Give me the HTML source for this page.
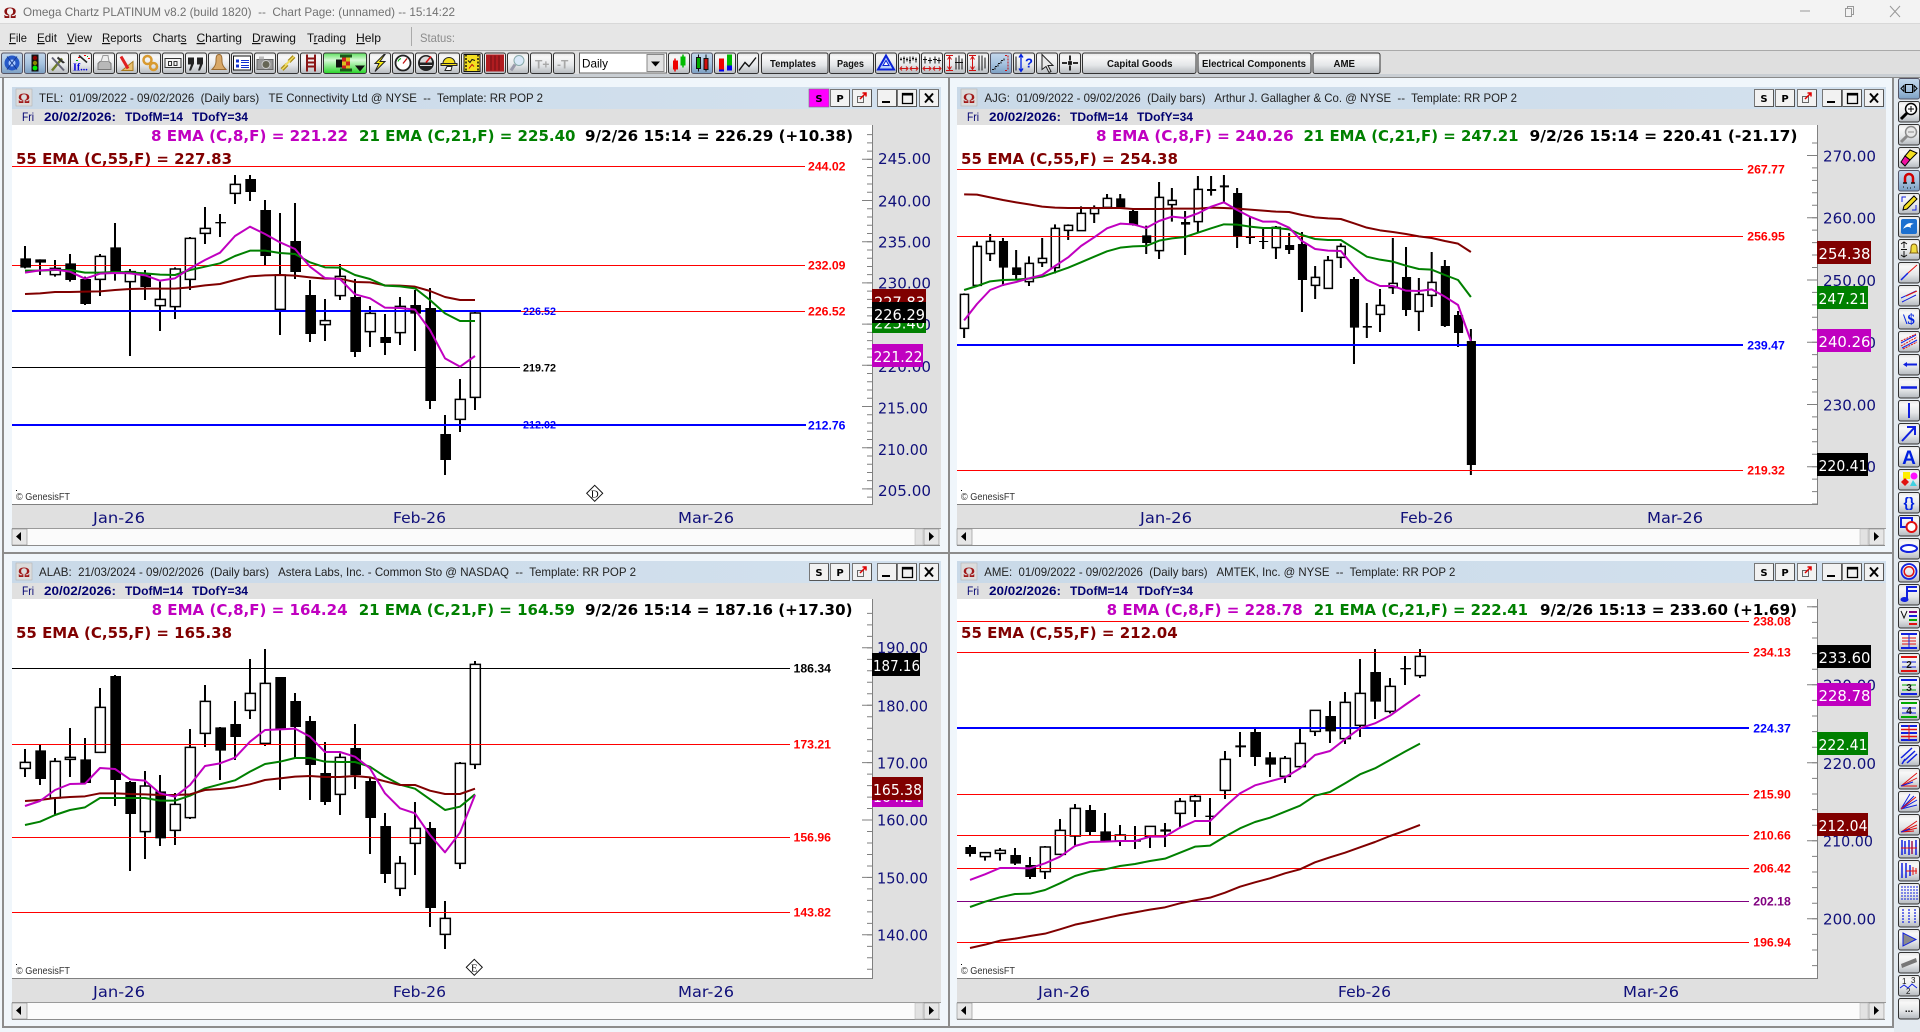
<!DOCTYPE html>
<html><head><meta charset="utf-8"><title>Omega Chartz PLATINUM</title>
<style>
html,body{margin:0;padding:0;background:#f0f6fb;overflow:hidden}
svg{display:block}
text{white-space:pre;font-family:"Liberation Sans",sans-serif}
.h{font:bold 15px "DejaVu Sans",sans-serif}
.a{font:15px "DejaVu Sans",sans-serif;fill:#10107a}
.t{font:15px "DejaVu Sans",sans-serif;fill:#fff}
.l{font:bold 12px "Liberation Sans",sans-serif}
.s{font:bold 11px "Liberation Sans",sans-serif}
.w{fill:none;stroke:#000;stroke-width:6}
.wb{fill:#fff;stroke:#000;stroke-width:4.5}
.m{fill:none;stroke:#c000c0;stroke-width:6;stroke-linejoin:round}
.g{fill:none;stroke:#008000;stroke-width:6;stroke-linejoin:round}
.r{fill:none;stroke:#800000;stroke-width:6;stroke-linejoin:round}
.tick{fill:none;stroke:#808080}
.bl{font:bold 10.5px "Liberation Sans",sans-serif;fill:#111}
.tt{font:12px "Liberation Sans",sans-serif;fill:#222}
.dd{font:bold 12px "Liberation Sans",sans-serif;fill:#000070}
.mn{font:12px "Liberation Sans",sans-serif;fill:#111}
.c{font:10px "Liberation Sans",sans-serif;fill:#333}
</style></head><body>
<svg xmlns="http://www.w3.org/2000/svg" width="1920" height="1032" viewBox="0 0 1920 1032">
<defs>
<linearGradient id="gb" x1="0" y1="0" x2="0" y2="1"><stop offset="0" stop-color="#e6e6e6"/><stop offset=".2" stop-color="#f8f8f8"/><stop offset=".6" stop-color="#e4e6e8"/><stop offset="1" stop-color="#b4b9be"/></linearGradient>
<linearGradient id="ga" x1="0" y1="0" x2="0" y2="1"><stop offset="0" stop-color="#c4d8ec"/><stop offset=".5" stop-color="#a8c4e0"/><stop offset="1" stop-color="#7c9fc2"/></linearGradient>
<linearGradient id="gg" x1="0" y1="0" x2="0" y2="1"><stop offset="0" stop-color="#5ee05e"/><stop offset=".35" stop-color="#d8fad8"/><stop offset="1" stop-color="#28d428"/></linearGradient>
<linearGradient id="gt" x1="0" y1="0" x2="1" y2="0"><stop offset="0" stop-color="#c9d9e8"/><stop offset="1" stop-color="#d3e1ee"/></linearGradient>
<g id="b"><rect x=".5" y=".5" width="21" height="20.5" rx="2" fill="url(#gb)" stroke="#333"/></g>
<g id="ba"><rect x=".5" y=".5" width="21" height="20.5" rx="2" fill="url(#ga)" stroke="#556"/></g>
<g id="wb"><rect x=".5" y=".5" width="19" height="17" fill="#f2f2f2" stroke="#777"/><path d="M1 17.500H19.500V1" fill="none" stroke="#555"/></g>
<g id="p">
<rect x="12" y="87" width="929" height="22" fill="url(#gt)"/>
<rect x="12" y="109" width="929" height="16" fill="#e0e0e0"/>
<rect x="12" y="125" width="860" height="379" fill="#fff"/>
<rect x="872" y="125" width="69" height="379" fill="#e0e0e0"/>
<rect x="12" y="504" width="929" height="25" fill="#e0e0e0"/>
<rect x="872" y="125" width="1" height="380" fill="#808080"/>
<rect x="12" y="504" width="861" height="1" fill="#808080"/>
<rect x="12" y="528" width="929" height="1" fill="#9a9a9a"/>
<rect x="12" y="529" width="928" height="16" fill="#fbfbfb"/>
<rect x="12" y="545" width="928" height="1" fill="#8c8c8c"/>
<rect x="12" y="529" width="15" height="16" fill="#e6e6e6" stroke="#888" stroke-width=".6"/>
<path d="M21 532v9l-5-4.500z" fill="#000"/>
<rect x="915" y="529" width="8" height="16" fill="#e2e2e2" stroke="#bbb" stroke-width=".6"/>
<rect x="924" y="529" width="15" height="16" fill="#e6e6e6" stroke="#888" stroke-width=".6"/>
<path d="M929 532v9l5-4.500z" fill="#000"/>
<rect x="16" y="89" width="16" height="17" fill="#dcdcdc" stroke="#b5b5b5" stroke-width=".6"/>
<text x="24" y="103" text-anchor="middle" style="font:bold 15px 'Liberation Serif',serif;fill:#a01818">Ω</text>
<use href="#wb" x="809" y="89"/><use href="#wb" x="830" y="89"/><use href="#wb" x="852" y="89"/>
<use href="#wb" x="877" y="89"/><use href="#wb" x="897" y="89"/><use href="#wb" x="919" y="89"/>
<text x="819" y="102" text-anchor="middle" style="font:bold 10px 'DejaVu Sans',sans-serif;fill:#000">S</text>
<text x="840" y="102" text-anchor="middle" style="font:bold 10px 'DejaVu Sans',sans-serif;fill:#000">P</text>
<path d="M857.500 96.500h6v6h-6z" fill="none" stroke="#666"/><path d="M860 99l6-6m-3.500 0h3.500v3.500" fill="none" stroke="#e00000" stroke-width="1.500"/>
<rect x="882" y="101" width="8" height="2" fill="#000"/>
<rect x="902.500" y="93.500" width="10" height="10" fill="none" stroke="#000" stroke-width="1.300"/><rect x="902" y="93" width="11" height="2.500" fill="#000"/>
<path d="M925 93.500l8 9m0-9l-8 9" stroke="#000" stroke-width="2" fill="none"/>
</g>
</defs>

<rect width="1920" height="1032" fill="#f0f6fb"/>
<!-- window top -->
<rect width="1920" height="23" fill="#f3f3f3"/>
<rect y="23" width="1920" height="1" fill="#d8d8d8"/>
<rect y="24" width="1920" height="26" fill="#e6e6e6"/>
<rect y="50" width="1920" height="1" fill="#a9a9a9"/>
<rect y="51" width="1920" height="23" fill="#dfdfdf"/>
<rect y="74" width="1920" height="3" fill="#c9ced3"/>
<rect y="77" width="1920" height="1" fill="#8a8a8a"/>
<text x="10" y="18" text-anchor="middle" style="font:bold 16px 'Liberation Serif',serif;fill:#8a1010">Ω</text>
<text x="23" y="16" textLength="432" lengthAdjust="spacingAndGlyphs" style="font:12px 'Liberation Sans',sans-serif;fill:#717171">Omega Chartz PLATINUM v8.2 (build 1820)  --  Chart Page: (unnamed) -- 15:14:22</text>
<path d="M1800 11h10" stroke="#999"/><path d="M1845.500 8.500h6v8h-6zM1847.500 8.500v-2h6v8h-2" fill="none" stroke="#999"/><path d="M1890 6l10 11m0-11l-10 11" stroke="#999" fill="none"/>
<text class="mn" x="9" y="42" textLength="18" lengthAdjust="spacingAndGlyphs"><tspan text-decoration="underline">F</tspan>ile</text>
<text class="mn" x="37" y="42" textLength="20" lengthAdjust="spacingAndGlyphs"><tspan text-decoration="underline">E</tspan>dit</text>
<text class="mn" x="67" y="42" textLength="25" lengthAdjust="spacingAndGlyphs"><tspan text-decoration="underline">V</tspan>iew</text>
<text class="mn" x="102" y="42" textLength="40" lengthAdjust="spacingAndGlyphs"><tspan text-decoration="underline">R</tspan>eports</text>
<text class="mn" x="152.500" y="42" textLength="34" lengthAdjust="spacingAndGlyphs">Chart<tspan text-decoration="underline">s</tspan></text>
<text class="mn" x="196.500" y="42" textLength="45.500" lengthAdjust="spacingAndGlyphs"><tspan text-decoration="underline">C</tspan>harting</text>
<text class="mn" x="252" y="42" textLength="44" lengthAdjust="spacingAndGlyphs"><tspan text-decoration="underline">D</tspan>rawing</text>
<text class="mn" x="307" y="42" textLength="39" lengthAdjust="spacingAndGlyphs">T<tspan text-decoration="underline">r</tspan>ading</text>
<text class="mn" x="356" y="42" textLength="25" lengthAdjust="spacingAndGlyphs"><tspan text-decoration="underline">H</tspan>elp</text>
<rect x="411" y="27" width="1" height="19" fill="#aaa"/>
<text x="420" y="42" textLength="35" lengthAdjust="spacingAndGlyphs" style="font:12px 'Liberation Sans',sans-serif;fill:#8c8c8c">Status:</text>

<!-- top toolbar -->
<g transform="translate(0,52.500)">
<use href="#ba" x="1"/><g transform="translate(1,0)"><circle cx="11" cy="10.500" r="7.500" fill="#2558c8"/><circle cx="11" cy="10.500" r="3.500" fill="#a8c8ff"/><path d="M6 4l10 13M16 4L6 17" stroke="#143a90"/></g>
<use href="#ba" x="24"/><g transform="translate(24,0)"><rect x="7.500" y="2" width="7" height="17" fill="#111"/><circle cx="11" cy="5.500" r="2.200" fill="#800"/><circle cx="11" cy="10.500" r="2.200" fill="#880"/><circle cx="11" cy="15.500" r="2.400" fill="#0e0"/></g>
<use href="#b" x="47"/><g transform="translate(47,0)"><path d="M5 18L15 6" stroke="#6f7d2a" stroke-width="2.500"/><path d="M11 4l7 6-2 1-6-5z" fill="#333"/><path d="M5 5l12 13" stroke="#667" stroke-width="2"/></g>
<use href="#b" x="70"/><g transform="translate(70,0)"><text x="3" y="18" style="font:bold 10px 'Liberation Serif',serif;fill:#0000e0">If...</text><path d="M9 3l8 7" stroke="#222" stroke-width="1.500"/><path d="M8 5h2M14 3h2M18 6h2" stroke="#e00"/><path d="M6 8h2M17 4h1" stroke="#0a0"/></g>
<use href="#b" x="93"/><g transform="translate(93,0)"><path d="M5 11l2-2h9l2 2v6H5z" fill="#b8b8b8" stroke="#777"/><path d="M8 9l2-6h5l1 6z" fill="#eee" stroke="#999"/></g>
<use href="#b" x="116"/><g transform="translate(116,0)"><path d="M17 18H6l11-9z" fill="#e8c070" stroke="#a87a20"/><path d="M5 4l7 12" stroke="#e02020" stroke-width="3"/></g>
<use href="#b" x="139"/><g transform="translate(139,0)"><circle cx="8.500" cy="7.500" r="4" fill="none" stroke="#d89a30" stroke-width="2.500"/><circle cx="14.500" cy="14" r="3.500" fill="none" stroke="#d89a30" stroke-width="2.500"/></g>
<use href="#b" x="162"/><g transform="translate(162,0)"><path d="M3 6h16v9H3z" fill="#f4f4f4" stroke="#333"/><path d="M6.500 9h3v4h-3zM12 9h3v4h-3z" fill="none" stroke="#333"/></g>
<use href="#b" x="185"/><g transform="translate(185,0)"><path d="M3 5h6v6l-3 7h-2l2-6H3zM12 5h6v6l-3 7h-2l2-6h-3z" fill="#222"/></g>
<use href="#b" x="208"/><g transform="translate(208,0)"><path d="M11 2c3 0 3 3 3 7s3 7 4 8H4c1-1 4-4 4-8s0-7 3-7z" fill="#d8a868" stroke="#9a6a30"/></g>
<use href="#b" x="231"/><g transform="translate(231,0)"><path d="M2.500 3.500h17v14h-17z" fill="#fff" stroke="#111"/><path d="M5 7h3v3H5zM5 12h3v3H5z" fill="#1030d0"/><path d="M10 8h8M10 10h8M10 13h8M10 15h8" stroke="#1030d0"/></g>
<use href="#b" x="254"/><g transform="translate(254,0)"><path d="M3 7h16v10H3z" fill="#999" stroke="#666"/><circle cx="12" cy="12" r="4" fill="#665" stroke="#ccc"/><path d="M5 4h5v3H5z" fill="#bbb"/></g>
<use href="#b" x="277"/><g transform="translate(277,0)"><path d="M5 17l5-5M12 9l5-5" stroke="#a88a18" stroke-width="4"/><path d="M8 13l5-5" stroke="#f0dc60" stroke-width="2"/><path d="M5 17l5-5M12 9l5-5" stroke="#f0dc60" stroke-width="1.500"/></g>
<use href="#b" x="300"/><g transform="translate(300,0)"><path d="M7 2v17M15 2v17M7 6h8M7 10h8M7 14h8" stroke="#8a1414" stroke-width="2" fill="none"/></g>
<rect x="323.500" y=".5" width="43" height="20.500" rx="2" fill="url(#gg)" stroke="#333"/>
<g transform="translate(323,0)"><path d="M13 7h6v8h-6z" fill="#111"/><path d="M19 5h8v11h-8z" fill="#d8c020"/><path d="M19 5h4v4h-4zM23 9h4v4h-4zM19 13h4v3h-4z" fill="#d02020"/><path d="M17 2h12v3H17zM17 16h12v3H17z" fill="#1a5a1a"/><path d="M32 13h10l-5 6z" fill="#111"/></g>
<use href="#b" x="369"/><g transform="translate(369,0)"><path d="M15 2L6 11h4l-4 8 10-10h-5l5-7z" fill="#f8ee10" stroke="#222"/></g>
<use href="#b" x="392"/><g transform="translate(392,0)"><circle cx="11" cy="10.500" r="7.500" fill="#fff" stroke="#222" stroke-width="1.800"/><path d="M11 11l4-5" stroke="#c01010" stroke-width="1.300"/><path d="M6 9a5 5 0 0 1 3-3" stroke="#0a0" fill="none"/></g>
<use href="#b" x="415"/><g transform="translate(415,0)"><circle cx="11" cy="10.500" r="8" fill="#222"/><path d="M5 10a6 6 0 0 1 12 0z" fill="#d8d8d8"/><path d="M11 10l5-6" stroke="#e01010" stroke-width="1.500"/><path d="M5 13h12" stroke="#ddd"/></g>
<use href="#b" x="438"/><g transform="translate(438,0)"><path d="M5 11a6 6 0 0 1 12 0z" fill="#f4e020" stroke="#222"/><path d="M3 11h16v2H3z" fill="#f4e020" stroke="#222"/><path d="M7 18l2-4h5l-1 4z" fill="#fff" stroke="#222"/></g>
<use href="#b" x="461"/><g transform="translate(461,0)"><path d="M3 2h16v17H3z" fill="#f4e020" stroke="#111"/><path d="M5 2v17M17 2v17" stroke="#111" stroke-width="1.500" stroke-dasharray="2 1.500"/><path d="M7 8l2 2 2-3 3 1" stroke="#111" fill="none"/><path d="M8 16l3-4 2 2" stroke="#c01010" fill="none"/></g>
<use href="#b" x="484"/><g transform="translate(484,0)"><path d="M2 2h18v17H2z" fill="#b01c20"/><path d="M7 3v15M11 3v15M15 3v15" stroke="#701014"/></g>
<use href="#b" x="507"/><g transform="translate(507,0)"><circle cx="12" cy="8" r="5" fill="#d8e8f8" stroke="#8aa"/><path d="M8 12l-4 6" stroke="#99a" stroke-width="3"/></g>
<use href="#b" x="530"/><text x="535" y="16" style="font:bold 12px 'Liberation Sans',sans-serif;fill:#a8a8a8">T+</text>
<use href="#b" x="553"/><text x="557" y="16" style="font:bold 12px 'Liberation Sans',sans-serif;fill:#a8a8a8">-T</text>
<path d="M579.500 .5h87v20h-87z" fill="#fff" stroke="#666"/>
<text x="582" y="15" textLength="26" lengthAdjust="spacingAndGlyphs" style="font:12px 'Liberation Sans',sans-serif;fill:#000">Daily</text>
<rect x="647" y="2" width="17" height="17" fill="#e2e2e2" stroke="#888"/><path d="M651 9h9l-4.500 5z" fill="#000"/>
<use href="#b" x="668"/><g transform="translate(668,0)"><path d="M7 6v13" stroke="#e00" stroke-width="1.500"/><path d="M5 8h5v9H5z" fill="#e00"/><path d="M15 2v13" stroke="#0b0" stroke-width="1.500"/><path d="M12.500 4h5v9h-5z" fill="#0b0"/></g>
<use href="#ba" x="691"/><g transform="translate(691,0)"><path d="M7.500 2v17M15 2v17" stroke="#111"/><path d="M5.500 5h4v11h-4z" fill="#0a0" stroke="#111"/><path d="M13 6h4v11h-4z" fill="#d01010" stroke="#111"/></g>
<use href="#b" x="714"/><g transform="translate(714,0)"><path d="M5 6h5v11H5z" fill="#e00"/><path d="M5 17h5v2H5z" fill="#00e"/><path d="M13 2h5v11h-5z" fill="#0b0"/><path d="M13 13h5v5h-5z" fill="#00e"/></g>
<use href="#b" x="737"/><path transform="translate(737,0)" d="M2 18l6-8 4 4 7-9" stroke="#111" stroke-width="1.400" fill="none"/>
<rect x="761.500" y=".5" width="66.500" height="20.500" rx="2" fill="url(#gb)" stroke="#333"/>
<text class="bl" x="770" y="14.500" textLength="46" lengthAdjust="spacingAndGlyphs">Templates</text>
<rect x="829.500" y=".5" width="44" height="20.500" rx="2" fill="url(#gb)" stroke="#333"/>
<text class="bl" x="837" y="14.500" textLength="27" lengthAdjust="spacingAndGlyphs">Pages</text>
<use href="#b" x="875"/><g transform="translate(875,0)"><path d="M11 3L3 17h16z" fill="#b8d0f8" stroke="#0a22d8" stroke-width="2"/><path d="M11 8l-3 5h6z" fill="#fff" stroke="#0a22d8"/></g>
<use href="#b" x="898"/><g transform="translate(898,0)"><path d="M3 8v-3M6 11V4M9 9V5M12 11V4M15 8V4M18 10V5" stroke="#111" fill="none"/><path d="M2 7h2M5 6h2M8 7h2M11 8h2M14 6h2M17 7h2" stroke="#111"/><path d="M3 16h6M13 16h6M4 14l-2 2 2 2M8 14l2 2-2 2M14 14l-2 2 2 2M18 14l2 2-2 2" stroke="#d01010" fill="none"/></g>
<use href="#b" x="921"/><g transform="translate(921,0)"><path d="M4 4v7M9 5v6M14 4v7M18 5v6M2 7h4M7 8h4M12 7h4M16 8h4" stroke="#111" fill="none"/><path d="M3 16h6M13 16h6M4 14l-2 2 2 2M8 14l2 2-2 2M14 14l-2 2 2 2M18 14l2 2-2 2" stroke="#d01010" fill="none"/></g>
<use href="#b" x="944"/><g transform="translate(944,0)"><path d="M2 3h7M2 18h7M5.500 5v12M3.500 7l2-3 2 3M3.500 14l2 3 2-3" stroke="#d01010" fill="none"/><path d="M12 5v12M15 3v14M18 6v11M11 10h8" stroke="#111" fill="none"/></g>
<use href="#b" x="967"/><g transform="translate(967,0)"><path d="M2 3h7M2 18h7M5.500 5v12M3.500 7l2-3 2 3M3.500 14l2 3 2-3" stroke="#d01010" fill="none"/><path d="M12 3v15M15 3v15M18 5v11" stroke="#111" fill="none"/></g>
<use href="#ba" x="990"/><g transform="translate(990,0)"><path d="M2 17h3v-3h3v-3h3V8h3V5" stroke="#111" fill="none" stroke-dasharray="2 1"/><path d="M18 3v15M15 3h3M15 18h3" stroke="#d01010" stroke-dasharray="2 1" fill="none"/></g>
<use href="#b" x="1013"/><g transform="translate(1013,0)"><path d="M3 4v14" stroke="#111"/><path d="M8 3v16M6 5l2-3 2 3M6 16l2 3 2-3" stroke="#0020e0" fill="none" stroke-width="1.300"/><text x="12" y="15" style="font:bold 13px 'Liberation Sans',sans-serif;fill:#0020e0">?</text></g>
<use href="#b" x="1036"/><path transform="translate(1036,0)" d="M6 2v15l4-3 3 6 2-1-3-6h5z" fill="#e8e8e8" stroke="#222"/>
<use href="#b" x="1059"/><path transform="translate(1059,0)" d="M11 3v5M11 13v5M3 10.500h5M14 10.500h5M10 9.500h2v2h-2z" stroke="#111" stroke-width="1.800" fill="none"/>
<rect x="1082.500" y=".5" width="113.500" height="20.500" rx="2" fill="url(#gb)" stroke="#333"/>
<text class="bl" x="1107" y="14.500" textLength="65.500" lengthAdjust="spacingAndGlyphs">Capital Goods</text>
<rect x="1198" y=".5" width="113" height="20.500" rx="2" fill="url(#gb)" stroke="#333"/>
<text class="bl" x="1202" y="14.500" textLength="104" lengthAdjust="spacingAndGlyphs">Electrical Components</text>
<rect x="1313" y=".5" width="67" height="20.500" rx="2" fill="url(#gb)" stroke="#333"/>
<text class="bl" x="1333.500" y="14.500" textLength="21.500" lengthAdjust="spacingAndGlyphs">AME</text>
</g>

<!-- MDI frames -->
<rect x="2" y="78" width="2" height="949" fill="#8c8c8c"/>
<rect x="948" y="78" width="2" height="949" fill="#8c8c8c"/>
<rect x="1892" y="78" width="2" height="949" fill="#8c8c8c"/>
<rect x="2" y="552" width="1892" height="2" fill="#8c8c8c"/>
<rect x="2" y="1026" width="1892" height="2" fill="#8c8c8c"/>
<rect x="1894" y="78" width="26" height="954" fill="#e3eaf0"/>

<use href="#p"/>
<use href="#p" transform="translate(945,0)"/>
<use href="#p" transform="translate(0,474)"/>
<use href="#p" transform="translate(945,474)"/>
<rect x="809" y="89" width="20" height="18" fill="#ff00ff" stroke="#777" stroke-width=".6"/>
<text x="819" y="102" text-anchor="middle" style="font:bold 10px 'DejaVu Sans',sans-serif;fill:#000">S</text>

<!-- Titles -->
<text class="tt" x="39" y="102" textLength="504" lengthAdjust="spacingAndGlyphs">TEL:  01/09/2022 - 09/02/2026  (Daily bars)   TE Connectivity Ltd @ NYSE  --  Template: RR POP 2</text>
<text class="tt" x="984.500" y="102" textLength="532.500" lengthAdjust="spacingAndGlyphs">AJG:  01/09/2022 - 09/02/2026  (Daily bars)   Arthur J. Gallagher &amp; Co. @ NYSE  --  Template: RR POP 2</text>
<text class="tt" x="39" y="576" textLength="597" lengthAdjust="spacingAndGlyphs">ALAB:  21/03/2024 - 09/02/2026  (Daily bars)   Astera Labs, Inc. - Common Sto @ NASDAQ  --  Template: RR POP 2</text>
<text class="tt" x="984.300" y="576" textLength="471" lengthAdjust="spacingAndGlyphs">AME:  01/09/2022 - 09/02/2026  (Daily bars)   AMTEK, Inc. @ NYSE  --  Template: RR POP 2</text>

<!-- date rows -->
<g id="dr"><text x="22" y="121" textLength="12" lengthAdjust="spacingAndGlyphs" style="font:12px 'Liberation Sans',sans-serif;fill:#000070">Fri</text><text class="dd" x="44" y="121" textLength="72" lengthAdjust="spacingAndGlyphs">20/02/2026:</text><text class="dd" x="125" y="121" textLength="58" lengthAdjust="spacingAndGlyphs">TDofM=14</text><text class="dd" x="192" y="121" textLength="56" lengthAdjust="spacingAndGlyphs">TDofY=34</text></g>
<use href="#dr" transform="translate(945,0)"/><use href="#dr" transform="translate(0,474)"/><use href="#dr" transform="translate(945,474)"/>

<!-- ================= TEL ================= -->
<g transform="translate(0,160) scale(.33333)">
<path class="w" d="M75 258V325M120 298V345M165 300V350M210 282V365M255 350V435M300 282V408M345 189V362M390 327V588M435 330V420M480 365V513M525 322V477M570 231V390M615 141V252M660 162V231M705 45V132M750 45V123M795 120V316M840 159V525M885 129V357M930 360V546M975 417V543M1020 312V420M1065 357V591M1110 438V561M1155 462V585M1200 411V555M1245 390V573M1290 384V747M1335 765V945M1380 657V816M1425 454V750"/>
<path class="wb" d="M151 325h30V344h-30zM286 289h30V358h-30zM376 335h30V365h-30zM466 418h30V437h-30zM511 327h30V440h-30zM556 235h30V358h-30zM601 205h30V220h-30zM691 73h30V100h-30zM826 345h30V448h-30zM961 482h30V494h-30zM1006 349h30V407h-30zM1096 460h30V515h-30zM1186 439h30V518h-30zM1366 718h30V778h-30zM1411 459h30V712h-30z"/>
</g>
<rect x="12" y="166" width="793" height="1" fill="#f00"/><rect x="12" y="265" width="793" height="1" fill="#f00"/>
<rect x="12" y="310" width="509" height="2" fill="#00f"/><rect x="521" y="311" width="284" height="1" fill="#f00"/>
<rect x="12" y="367" width="508" height="1" fill="#000"/>
<text class="s" x="523" y="428.500" textLength="33" fill="#00f" lengthAdjust="spacingAndGlyphs">212.02</text>
<rect x="12" y="424" width="509" height="2" fill="#00f"/><rect x="521" y="424" width="285" height="2" fill="#00f"/>
<g transform="translate(0,160) scale(.33333)">
<path fill="#000" d="M61 295h32V323h-32zM106 298h32V308h-32zM196 310h32V360h-32zM241 357h32V432h-32zM331 262h32V335h-32zM421 344h32V381h-32zM646 186h32V190h-32zM736 57h32V96h-32zM781 150h32V288h-32zM871 243h32V336h-32zM916 405h32V522h-32zM1051 411h32V576h-32zM1141 531h32V549h-32zM1231 435h32V461h-32zM1276 444h32V723h-32zM1321 822h32V900h-32z"/>
<polyline class="r" points="75,402 120,400 165,396 210,396 255,395 300,394 345,390 390,387 435,386 480,386 525,386 570,382 615,376 660,372 705,360 750,349 795,346 840,345 885,347 930,352 975,356 1020,356 1065,366 1110,367 1155,376 1200,377 1245,380 1290,393 1335,411 1380,420 1425,420"/>
<polyline class="g" points="75,332 120,332 165,330 210,330 255,338 300,338 345,336 390,337 435,340 480,344 525,345 570,330 615,320 660,310 705,288 750,272 795,272 840,279 885,282 930,307 975,322 1020,323 1065,345 1110,357 1155,377 1200,379 1245,385 1290,420 1335,460 1380,483 1425,483"/>
<polyline class="m" points="75,338 120,331 165,329 210,335 255,356 300,341 345,339 390,340 435,346 480,362 525,355 570,325 615,300 660,278 705,228 750,200 795,222 840,247 885,267 930,320 975,354 1020,357 1065,403 1110,415 1155,443 1200,444 1245,449 1290,510 1335,595 1380,620 1425,588"/>
</g>
<text class="l" x="808" y="170.500" textLength="37.500" fill="#f00" lengthAdjust="spacingAndGlyphs">244.02</text>
<text class="l" x="808" y="269.500" textLength="37.500" fill="#f00" lengthAdjust="spacingAndGlyphs">232.09</text>
<text class="l" x="808" y="315.500" textLength="37.500" fill="#f00" lengthAdjust="spacingAndGlyphs">226.52</text>
<text class="l" x="808" y="429.500" textLength="37.500" fill="#00f" lengthAdjust="spacingAndGlyphs">212.76</text>
<text class="s" x="523" y="315" textLength="33" fill="#00f" lengthAdjust="spacingAndGlyphs">226.52</text>
<text class="s" x="523" y="371.500" textLength="33" fill="#000" lengthAdjust="spacingAndGlyphs">219.72</text>
<g><path d="M594.700 485.300l8 8-8 8-8-8z" fill="#fff" stroke="#111"/><text x="594.700" y="497.500" text-anchor="middle" style="font:11px 'Liberation Serif',serif;fill:#111">D</text></g>
<rect x="16" y="490" width="1" height="1" fill="#000"/><text class="c" x="16" y="500" textLength="54" lengthAdjust="spacingAndGlyphs">© GenesisFT</text>
<text class="h" x="151" y="141" textLength="197" fill="#c000c0" lengthAdjust="spacingAndGlyphs">8 EMA (C,8,F) = 221.22</text>
<text class="h" x="359" y="141" textLength="216.500" fill="#008000" lengthAdjust="spacingAndGlyphs">21 EMA (C,21,F) = 225.40</text>
<text class="h" x="585" y="141" textLength="268" fill="#000" lengthAdjust="spacingAndGlyphs">9/2/26 15:14 = 226.29 (+10.38)</text>
<text class="h" x="16" y="164" textLength="216" fill="#800000" lengthAdjust="spacingAndGlyphs">55 EMA (C,55,F) = 227.83</text>
<path class="tick" stroke-width="5" stroke-dasharray="1 7.240" d="M869.500 134.100V504"/>
<path class="tick" stroke-width="10" stroke-dasharray="1 40.200" d="M867 158.800V504"/>
<text class="a" x="878" y="164" textLength="53" lengthAdjust="spacingAndGlyphs">245.00</text>
<text class="a" x="878" y="206.500" textLength="53" lengthAdjust="spacingAndGlyphs">240.00</text>
<text class="a" x="878" y="247.500" textLength="53" lengthAdjust="spacingAndGlyphs">235.00</text>
<text class="a" x="878" y="288.500" textLength="53" lengthAdjust="spacingAndGlyphs">230.00</text>
<text class="a" x="878" y="330" textLength="53" lengthAdjust="spacingAndGlyphs">225.00</text>
<text class="a" x="878" y="372" textLength="53" lengthAdjust="spacingAndGlyphs">220.00</text>
<text class="a" x="878" y="413.500" textLength="50" lengthAdjust="spacingAndGlyphs">215.00</text>
<text class="a" x="878" y="455" textLength="50" lengthAdjust="spacingAndGlyphs">210.00</text>
<text class="a" x="878" y="496" textLength="53" lengthAdjust="spacingAndGlyphs">205.00</text>
<rect x="872" y="289" width="54" height="23" fill="#800000"/><text class="t" x="874" y="307.500" textLength="51" lengthAdjust="spacingAndGlyphs">227.83</text>
<rect x="872" y="310" width="54" height="23" fill="#008000"/><text class="t" x="874" y="328.500" textLength="51" lengthAdjust="spacingAndGlyphs">225.40</text>
<rect x="872" y="302" width="54" height="21" fill="#000"/><text class="t" x="874" y="320" textLength="51" lengthAdjust="spacingAndGlyphs">226.29</text>
<rect x="872" y="344" width="51" height="23" fill="#c000c0"/><text class="t" x="873.500" y="362" textLength="49" lengthAdjust="spacingAndGlyphs">221.22</text>
<text class="a" x="93" y="523" textLength="52" lengthAdjust="spacingAndGlyphs">Jan-26</text><text class="a" x="393" y="523" textLength="53" lengthAdjust="spacingAndGlyphs">Feb-26</text><text class="a" x="678" y="523" textLength="56" lengthAdjust="spacingAndGlyphs">Mar-26</text>

<!-- ================= AJG ================= -->
<g transform="translate(955,160) scale(.33784,.33333)">
<path class="w" d="M27 400V534M65 244V378M104 222V303M142 234V378M181 270V360M219 289V378M258 234V321M296 193V340M335 193V240M373 139V212M412 136V189M450 102V142M489 102V142M527 147V197M566 197V282M604 66V297M642 84V185M681 153V285M719 48V216M758 48V107M796 45V127M835 84V264M873 171V252M912 207V267M950 198V297M989 219V282M1027 216V456M1066 318V417M1104 288V385M1142 250V324M1181 351V612M1219 429V534M1258 387V516M1296 234V402M1335 261V468M1373 354V513M1411 276V441M1450 300V501M1489 453V561M1527 507V945"/>
<path class="wb" d="M16 403h24V505h-24zM54 259h24V376h-24zM93 244h24V281h-24zM208 310h24V365h-24zM247 295h24V308h-24zM285 205h24V323h-24zM324 196h24V211h-24zM362 160h24V212h-24zM401 145h24V161h-24zM439 115h24V142h-24zM593 112h24V272h-24zM631 121h24V134h-24zM708 88h24V185h-24zM939 202h24V263h-24zM1055 352h24V376h-24zM1093 301h24V385h-24zM1131 259h24V292h-24zM1247 436h24V463h-24zM1285 370h24V383h-24zM1362 403h24V454h-24zM1400 367h24V406h-24z"/>
</g>
<rect x="957" y="169" width="786" height="1" fill="#f00"/><rect x="957" y="236" width="786" height="1" fill="#f00"/><rect x="957" y="344" width="786" height="2" fill="#00f"/><rect x="957" y="470" width="786" height="1" fill="#f00"/>
<g transform="translate(955,160) scale(.33784,.33333)">
<path fill="#000" d="M130 243h27V323h-27zM169 322h27V345h-27zM477 115h27V142h-27zM515 153h27V195h-27zM554 226h27V249h-27zM669 186h27V194h-27zM746 87h27V93h-27zM784 76h27V82h-27zM823 99h27V229h-27zM861 230h27V234h-27zM900 243h27V246h-27zM977 255h27V270h-27zM1015 252h27V360h-27zM1169 357h27V503h-27zM1207 498h27V503h-27zM1323 351h27V450h-27zM1438 318h27V498h-27zM1477 465h27V519h-27zM1515 543h27V915h-27z"/>
<polyline class="r" points="27,103 65,104 104,112 142,120 181,127 219,133 258,140 296,143 335,144 373,144 412,144 450,144 489,144 527,147 566,147 604,147 642,146 681,146 719,146 758,143 796,144 835,146 873,149 912,152 950,155 989,156 1027,165 1066,172 1104,175 1142,177 1181,190 1219,203 1258,211 1296,216 1335,222 1373,229 1411,234 1450,243 1489,251 1527,276"/>
<polyline class="g" points="27,390 65,378 104,364 142,360 181,359 219,356 258,350 296,337 335,323 373,307 412,290 450,274 489,263 527,259 566,258 604,242 642,235 681,231 719,218 758,205 796,193 835,194 873,200 912,204 950,204 989,208 1027,225 1066,237 1104,240 1142,240 1181,265 1219,290 1258,299 1296,305 1335,317 1373,327 1411,329 1450,345 1489,360 1527,411"/>
<polyline class="m" points="27,481 65,432 104,390 142,375 181,366 219,355 258,345 296,318 335,292 373,258 412,232 450,205 489,191 527,193 566,204 604,183 642,170 681,174 719,160 758,140 796,127 835,150 873,170 912,185 950,185 989,203 1027,243 1066,267 1104,272 1142,273 1181,320 1219,360 1258,378 1296,378 1335,392 1373,393 1411,388 1450,410 1489,435 1527,543"/>
</g>
<text class="l" x="1747.300" y="173.500" textLength="37.500" fill="#f00" lengthAdjust="spacingAndGlyphs">267.77</text>
<text class="l" x="1747.300" y="240.500" textLength="37.500" fill="#f00" lengthAdjust="spacingAndGlyphs">256.95</text>
<text class="l" x="1747.300" y="349.500" textLength="37.500" fill="#00f" lengthAdjust="spacingAndGlyphs">239.47</text>
<text class="l" x="1747.300" y="474.500" textLength="37.500" fill="#f00" lengthAdjust="spacingAndGlyphs">219.32</text>
<rect x="961" y="490" width="1" height="1" fill="#000"/><text class="c" x="961" y="500" textLength="54" lengthAdjust="spacingAndGlyphs">© GenesisFT</text>
<text class="h" x="1096" y="141" textLength="197.700" fill="#c000c0" lengthAdjust="spacingAndGlyphs">8 EMA (C,8,F) = 240.26</text>
<text class="h" x="1303.500" y="141" textLength="215" fill="#008000" lengthAdjust="spacingAndGlyphs">21 EMA (C,21,F) = 247.21</text>
<text class="h" x="1529.500" y="141" textLength="268" fill="#000" lengthAdjust="spacingAndGlyphs">9/2/26 15:14 = 220.41 (-21.17)</text>
<text class="h" x="961" y="164" textLength="217" fill="#800000" lengthAdjust="spacingAndGlyphs">55 EMA (C,55,F) = 254.38</text>
<path class="tick" stroke-width="5" stroke-dasharray="1 11.450" d="M1814.500 142.500V504"/>
<path class="tick" stroke-width="10" stroke-dasharray="1 61.250" d="M1812 155V504"/>
<text class="a" x="1823" y="161.500" textLength="53" lengthAdjust="spacingAndGlyphs">270.00</text>
<text class="a" x="1823" y="223.500" textLength="53" lengthAdjust="spacingAndGlyphs">260.00</text>
<text class="a" x="1823" y="286" textLength="53" lengthAdjust="spacingAndGlyphs">250.00</text>
<text class="a" x="1823" y="348" textLength="53" lengthAdjust="spacingAndGlyphs">240.00</text>
<text class="a" x="1823" y="410.500" textLength="53" lengthAdjust="spacingAndGlyphs">230.00</text>
<text class="a" x="1823" y="472" textLength="53" lengthAdjust="spacingAndGlyphs">220.00</text>
<rect x="1817" y="241" width="54" height="23" fill="#800000"/><text class="t" x="1818.500" y="259" textLength="52" lengthAdjust="spacingAndGlyphs">254.38</text>
<rect x="1817" y="286" width="51" height="23" fill="#008000"/><text class="t" x="1818.500" y="304" textLength="49" lengthAdjust="spacingAndGlyphs">247.21</text>
<rect x="1817" y="329" width="54" height="23" fill="#c000c0"/><text class="t" x="1818.500" y="347" textLength="52" lengthAdjust="spacingAndGlyphs">240.26</text>
<rect x="1817" y="453" width="51" height="23" fill="#000"/><text class="t" x="1818.500" y="471" textLength="49" lengthAdjust="spacingAndGlyphs">220.41</text>
<text class="a" x="1140" y="523" textLength="52" lengthAdjust="spacingAndGlyphs">Jan-26</text><text class="a" x="1400" y="523" textLength="53" lengthAdjust="spacingAndGlyphs">Feb-26</text><text class="a" x="1647" y="523" textLength="56" lengthAdjust="spacingAndGlyphs">Mar-26</text>

<!-- ================= ALAB ================= -->
<g transform="translate(0,550) scale(.33333)">
<path class="w" d="M75 597V681M120 585V705M165 624V795M210 534V681M255 564V702M300 414V607M345 375V768M390 693V963M435 663V927M480 675V888M525 729V885M570 537V807M615 405V591M660 531V690M705 453V630M750 327V507M795 297V588M840 381V720M885 429V624M930 498V750M975 576V765M1020 610V795M1065 522V717M1110 684V912M1155 789V999M1200 918V1038M1245 756V975M1290 816V1131M1335 1053V1197M1380 636V957M1425 333V657"/>
<path class="wb" d="M61 637h30V655h-30zM151 634h30V744h-30zM196 622h30V628h-30zM286 472h30V607h-30zM421 708h30V845h-30zM511 763h30V841h-30zM556 592h30V803h-30zM601 454h30V550h-30zM736 430h30V481h-30zM781 400h30V580h-30zM1006 622h30V733h-30zM1186 940h30V1015h-30zM1231 835h30V880h-30zM1321 1105h30V1153h-30zM1366 640h30V940h-30zM1411 343h30V643h-30z"/>
</g>
<rect x="12" y="668" width="778" height="1" fill="#000"/><rect x="12" y="744" width="778" height="1" fill="#f00"/><rect x="12" y="837" width="778" height="1" fill="#f00"/><rect x="12" y="912" width="778" height="1" fill="#f00"/>
<g transform="translate(0,550) scale(.33333)">
<path fill="#000" d="M106 601h32V687h-32zM241 628h32V699h-32zM331 378h32V690h-32zM376 696h32V792h-32zM466 724h32V865h-32zM646 532h32V602h-32zM691 522h32V561h-32zM826 381h32V537h-32zM871 453h32V531h-32zM916 513h32V645h-32zM961 669h32V756h-32zM1051 594h32V675h-32zM1096 693h32V804h-32zM1141 828h32V972h-32zM1276 834h32V1074h-32z"/>
<polyline class="g" points="75,825 120,815 165,795 210,780 255,772 300,744 345,744 390,744 435,744 480,752 525,752 570,737 615,715 660,703 705,691 750,665 795,642 840,635 885,624 930,624 975,635 1020,636 1065,636 1110,650 1155,680 1200,704 1245,716 1290,748 1335,780 1380,770 1425,733"/>
<polyline class="r" points="75,753 120,750 165,744 210,741 255,739 300,730 345,730 390,732 435,733 480,735 525,735 570,733 615,720 660,717 705,712 750,703 795,690 840,685 885,680 930,678 975,681 1020,681 1065,678 1110,682 1155,694 1200,705 1245,705 1290,722 1335,732 1380,732 1425,716"/>
<polyline class="m" points="75,768 120,753 165,720 210,702 255,701 300,654 345,657 390,688 435,692 480,730 525,740 570,705 615,648 660,640 705,623 750,575 795,540 840,538 885,536 930,560 975,606 1020,606 1065,620 1110,655 1155,730 1200,775 1245,790 1290,855 1335,907 1380,848 1425,735"/>
</g>
<text class="l" x="793.500" y="672.500" textLength="37.500" fill="#000" lengthAdjust="spacingAndGlyphs">186.34</text>
<text class="l" x="793.500" y="748.500" textLength="37.500" fill="#f00" lengthAdjust="spacingAndGlyphs">173.21</text>
<text class="l" x="793.500" y="841.500" textLength="37.500" fill="#f00" lengthAdjust="spacingAndGlyphs">156.96</text>
<text class="l" x="793.500" y="916.500" textLength="37.500" fill="#f00" lengthAdjust="spacingAndGlyphs">143.82</text>
<g><path d="M474.300 959.300l8 8-8 8-8-8z" fill="#fff" stroke="#111"/><text x="474.300" y="971.500" text-anchor="middle" style="font:11px 'Liberation Serif',serif;fill:#111">E</text></g>
<rect x="16" y="964" width="1" height="1" fill="#000"/><text class="c" x="16" y="974" textLength="54" lengthAdjust="spacingAndGlyphs">© GenesisFT</text>
<text class="h" x="151.600" y="615" textLength="196" fill="#c000c0" lengthAdjust="spacingAndGlyphs">8 EMA (C,8,F) = 164.24</text>
<text class="h" x="358.700" y="615" textLength="216.300" fill="#008000" lengthAdjust="spacingAndGlyphs">21 EMA (C,21,F) = 164.59</text>
<text class="h" x="585" y="615" textLength="267.500" fill="#000" lengthAdjust="spacingAndGlyphs">9/2/26 15:14 = 187.16 (+17.30)</text>
<text class="h" x="16" y="638" textLength="216" fill="#800000" lengthAdjust="spacingAndGlyphs">55 EMA (C,55,F) = 165.38</text>
<path class="tick" stroke-width="5" stroke-dasharray="1 10.480" d="M869.500 612.900V978"/>
<path class="tick" stroke-width="10" stroke-dasharray="1 56.400" d="M867 647.300V978"/>
<text class="a" x="877" y="653" textLength="51" lengthAdjust="spacingAndGlyphs">190.00</text>
<text class="a" x="877" y="711.500" textLength="51" lengthAdjust="spacingAndGlyphs">180.00</text>
<text class="a" x="877" y="768.500" textLength="51" lengthAdjust="spacingAndGlyphs">170.00</text>
<text class="a" x="877" y="825.500" textLength="51" lengthAdjust="spacingAndGlyphs">160.00</text>
<text class="a" x="877" y="883.500" textLength="51" lengthAdjust="spacingAndGlyphs">150.00</text>
<text class="a" x="877" y="940.500" textLength="51" lengthAdjust="spacingAndGlyphs">140.00</text>
<rect x="872" y="653" width="48" height="23" fill="#000"/><text class="t" x="873" y="671" textLength="47" lengthAdjust="spacingAndGlyphs">187.16</text>
<rect x="872" y="784" width="51" height="23" fill="#c000c0"/><text class="t" x="873" y="802" textLength="49" lengthAdjust="spacingAndGlyphs">164.24</text>
<rect x="872" y="777" width="51" height="23" fill="#800000"/><text class="t" x="873" y="795" textLength="49" lengthAdjust="spacingAndGlyphs">165.38</text>
<text class="a" x="93" y="997" textLength="52" lengthAdjust="spacingAndGlyphs">Jan-26</text><text class="a" x="393" y="997" textLength="53" lengthAdjust="spacingAndGlyphs">Feb-26</text><text class="a" x="678" y="997" textLength="56" lengthAdjust="spacingAndGlyphs">Mar-26</text>

<!-- ================= AME ================= -->
<g transform="translate(955,550) scale(.33333)">
<path class="w" d="M45 885V920M90 908V932M135 894V932M180 894V945M225 921V987M270 888V987M315 807V915M360 762V890M405 765V855M450 789V875M495 825V888M540 828V897M585 829V894M630 819V891M675 744V835M720 735V801M765 744V855M810 603V747M855 546V621M900 537V648M945 606V681M990 618V699M1035 537V650M1080 481V558M1125 453V579M1170 426V582M1215 327V561M1260 297V507M1305 384V490M1350 318V405M1395 297V384"/>
<path class="wb" d="M76 908h30V920h-30zM121 901h30V910h-30zM256 891h30V965h-30zM301 841h30V913h-30zM346 775h30V858h-30zM481 855h30V873h-30zM571 829h30V859h-30zM661 754h30V790h-30zM706 739h30V753h-30zM796 628h30V721h-30zM976 625h30V679h-30zM1021 580h30V650h-30zM1066 481h30V544h-30zM1156 457h30V566h-30zM1201 430h30V526h-30zM1291 409h30V484h-30zM1381 319h30V377h-30z"/>
</g>
<rect x="957" y="621" width="792" height="1" fill="#f00"/><rect x="957" y="652" width="792" height="1" fill="#f00"/><rect x="957" y="727" width="792" height="2" fill="#00f"/><rect x="957" y="794" width="792" height="1" fill="#f00"/><rect x="957" y="835" width="792" height="1" fill="#f00"/><rect x="957" y="868" width="792" height="1" fill="#f00"/><rect x="957" y="901" width="792" height="1" fill="#800080"/><rect x="957" y="942" width="792" height="1" fill="#f00"/>
<g transform="translate(955,550) scale(.33333)">
<path fill="#000" d="M31 891h32V912h-32zM166 915h32V941h-32zM211 945h32V981h-32zM391 780h32V846h-32zM436 844h32V875h-32zM526 871h32V875h-32zM616 838h32V845h-32zM751 797h32V801h-32zM841 586h32V592h-32zM886 546h32V621h-32zM931 622h32V644h-32zM1111 498h32V544h-32zM1246 366h32V455h-32zM1336 354h32V358h-32z"/>
<polyline class="r" points="45,1194 90,1184 135,1172 180,1166 225,1158 270,1151 315,1138 360,1124 405,1115 450,1105 495,1095 540,1087 585,1079 630,1072 675,1060 720,1051 765,1043 810,1028 855,1010 900,997 945,985 990,970 1035,958 1080,937 1125,922 1170,908 1215,892 1260,876 1305,858 1350,842 1395,825"/>
<polyline class="g" points="45,1071 90,1055 135,1042 180,1032 225,1031 270,1020 315,1000 360,978 405,965 450,958 495,948 540,942 585,933 630,926 675,908 720,890 765,887 810,860 855,835 900,816 945,803 990,785 1035,767 1080,737 1125,726 1170,700 1215,673 1260,655 1305,630 1350,605 1395,581"/>
<polyline class="m" points="45,990 90,973 135,954 180,954 225,955 270,940 315,920 360,888 405,876 450,875 495,873 540,873 585,860 630,860 675,833 720,813 765,813 810,770 855,730 900,706 945,694 990,682 1035,655 1080,615 1125,603 1170,568 1215,535 1260,520 1305,497 1350,465 1395,434"/>
</g>
<text class="l" x="1753.300" y="625.500" textLength="37.500" fill="#f00" lengthAdjust="spacingAndGlyphs">238.08</text>
<text class="l" x="1753.300" y="656.500" textLength="37.500" fill="#f00" lengthAdjust="spacingAndGlyphs">234.13</text>
<text class="l" x="1753.300" y="732.500" textLength="37.500" fill="#00f" lengthAdjust="spacingAndGlyphs">224.37</text>
<text class="l" x="1753.300" y="798.500" textLength="37.500" fill="#f00" lengthAdjust="spacingAndGlyphs">215.90</text>
<text class="l" x="1753.300" y="839.500" textLength="37.500" fill="#f00" lengthAdjust="spacingAndGlyphs">210.66</text>
<text class="l" x="1753.300" y="872.500" textLength="37.500" fill="#f00" lengthAdjust="spacingAndGlyphs">206.42</text>
<text class="l" x="1753.300" y="905.500" textLength="37.500" fill="#800080" lengthAdjust="spacingAndGlyphs">202.18</text>
<text class="l" x="1753.300" y="946.500" textLength="37.500" fill="#f00" lengthAdjust="spacingAndGlyphs">196.94</text>
<rect x="961" y="964" width="1" height="1" fill="#000"/><text class="c" x="961" y="974" textLength="54" lengthAdjust="spacingAndGlyphs">© GenesisFT</text>
<text class="h" x="1106.700" y="615" textLength="196" fill="#c000c0" lengthAdjust="spacingAndGlyphs">8 EMA (C,8,F) = 228.78</text>
<text class="h" x="1313.700" y="615" textLength="214.300" fill="#008000" lengthAdjust="spacingAndGlyphs">21 EMA (C,21,F) = 222.41</text>
<text class="h" x="1540" y="615" textLength="257" fill="#000" lengthAdjust="spacingAndGlyphs">9/2/26 15:13 = 233.60 (+1.69)</text>
<text class="h" x="961" y="638" textLength="216.700" fill="#800000" lengthAdjust="spacingAndGlyphs">55 EMA (C,55,F) = 212.04</text>
<path class="tick" stroke-width="5" stroke-dasharray="1 14.600" d="M1814.500 606.300V978"/>
<path class="tick" stroke-width="10" stroke-dasharray="1 77" d="M1812 606.300V978"/>
<text class="a" x="1823" y="690.500" textLength="53" lengthAdjust="spacingAndGlyphs">230.00</text>
<text class="a" x="1823" y="769" textLength="53" lengthAdjust="spacingAndGlyphs">220.00</text>
<text class="a" x="1823" y="846.500" textLength="50" lengthAdjust="spacingAndGlyphs">210.00</text>
<text class="a" x="1823" y="924.500" textLength="53" lengthAdjust="spacingAndGlyphs">200.00</text>
<rect x="1817" y="645" width="54" height="23" fill="#000"/><text class="t" x="1818.500" y="663" textLength="52" lengthAdjust="spacingAndGlyphs">233.60</text>
<rect x="1817" y="683" width="54" height="23" fill="#c000c0"/><text class="t" x="1818.500" y="701" textLength="52" lengthAdjust="spacingAndGlyphs">228.78</text>
<rect x="1817" y="732" width="51" height="23" fill="#008000"/><text class="t" x="1818.500" y="750" textLength="49" lengthAdjust="spacingAndGlyphs">222.41</text>
<rect x="1817" y="813" width="51" height="23" fill="#800000"/><text class="t" x="1818.500" y="831" textLength="49" lengthAdjust="spacingAndGlyphs">212.04</text>
<text class="a" x="1038" y="997" textLength="52" lengthAdjust="spacingAndGlyphs">Jan-26</text><text class="a" x="1338" y="997" textLength="53" lengthAdjust="spacingAndGlyphs">Feb-26</text><text class="a" x="1623" y="997" textLength="56" lengthAdjust="spacingAndGlyphs">Mar-26</text>

<!-- side toolbar -->
<g transform="translate(1898,78)">
<use href="#ba" y="0"/><path transform="translate(0,0)" d="M3 10.500l3-3v6zM19 10.500l-3-3v6zM7.500 6.500h7v8h-7z" fill="none" stroke="#000"/>
<use href="#b" y="23"/><g transform="translate(0,23)"><circle cx="13" cy="8" r="5.500" fill="#fff" stroke="#000" stroke-width="1.500"/><path d="M9 12l-6 6" stroke="#000" stroke-width="3"/><path d="M10 8h6M13 5v6" stroke="#000"/></g>
<use href="#b" y="46"/><g transform="translate(0,46)"><circle cx="13" cy="8" r="5.500" fill="#e8e8e8" stroke="#8a8a8a" stroke-width="1.500"/><path d="M9 12l-6 6" stroke="#8a8a8a" stroke-width="3"/><path d="M10 8h6" stroke="#8a8a8a"/></g>
<use href="#b" y="69"/><g transform="translate(0,69)"><path d="M12 3l7 3-7 7-5-4z" fill="#f4e020" stroke="#000"/><path d="M7 9l5 4-5 6-4-4z" fill="#f010a0" stroke="#000"/></g>
<use href="#ba" y="92"/><g transform="translate(0,92)"><path d="M7 13V8a4 4 0 0 1 8 0v5" fill="none" stroke="#d00000" stroke-width="2.500"/><path d="M5 13h4M13 13h4" stroke="#111" stroke-width="1.500"/><path d="M5 17h1M9 18h1M12 18h1M16 17h1" stroke="#111"/></g>
<use href="#b" y="115"/><g transform="translate(0,115)"><path d="M16 3l3 3-10 10-4 1 1-4z" fill="#f4e020" stroke="#000"/><path d="M4 9V4h4M18 12v5h-4" stroke="#1020e0" fill="none"/></g>
<use href="#b" y="138"/><g transform="translate(0,138)"><rect x="3" y="3" width="16" height="15" rx="2" fill="#1c70d0"/><path d="M5 13c3-6 7-7 11-5-3 0-4 2-3 4-3-2-5-1-8 1z" fill="#fff"/></g>
<use href="#b" y="161"/><g transform="translate(0,161)"><path d="M13 14c1-1 1-2 1-5s1-4 3-4 3 1 3 4 0 4 1 5z" transform="translate(-1,0)" fill="#f0dc40" stroke="#806010"/><path d="M6 3v6M3 5l3-2 3 2M6 12v6M3 16l3 2 3-2M3 10.500h6" stroke="#111" fill="none"/></g>
<use href="#b" y="184"/><path transform="translate(0,184)" d="M3 18l7-7" stroke="#1020e0" stroke-width="1.500"/><path transform="translate(0,184)" d="M10 11l9-8" stroke="#e01010"/>
<use href="#b" y="207"/><path transform="translate(0,207)" d="M3 13l15-7M4 17l14-7" stroke="#1020e0"/><path transform="translate(0,207)" d="M8 11l11-5" stroke="#e01010"/>
<use href="#b" y="230"/><text x="11" y="246" text-anchor="middle" style="font:bold 15px 'Liberation Serif',serif;fill:#0020e0">\$</text>
<use href="#b" y="253"/><path transform="translate(0,253)" d="M3 12l15-8M4 17l15-8" stroke="#1020e0"/><path transform="translate(0,253)" d="M3 15l16-9M3 10l15-7M5 18l14-7" stroke="#e01010" stroke-dasharray="2 1"/>
<use href="#b" y="276"/><path transform="translate(0,276)" d="M9 10.500h10" stroke="#1020e0" stroke-width="2"/><path transform="translate(0,276)" d="M9 8l-4 2.500 4 2.500z" fill="#1020e0"/>
<use href="#b" y="299"/><path transform="translate(0,299)" d="M3 10.500h16" stroke="#1020e0" stroke-width="2.500"/>
<use href="#b" y="322"/><path transform="translate(0,322)" d="M11 3v15" stroke="#1020e0" stroke-width="2"/>
<use href="#b" y="345"/><path transform="translate(0,345)" d="M4 18L17 4M9 4h8v8" stroke="#1020e0" stroke-width="2" fill="none"/>
<use href="#b" y="368"/><text x="11" y="386" text-anchor="middle" style="font:bold 19px 'Liberation Sans',sans-serif;fill:#0020e0">A</text>
<use href="#b" y="391"/><g transform="translate(0,391)"><rect x="5" y="3" width="7" height="7" fill="#ffee00"/><circle cx="16" cy="7" r="3.500" fill="#ff10ff"/><path d="M7 9l4 4-4 4-4-4z" fill="#e01010"/><path d="M15 11l4 6h-7z" fill="#40d0e0"/></g>
<use href="#b" y="414"/><text x="11" y="429" text-anchor="middle" style="font:bold 14px 'Liberation Sans',sans-serif;fill:#0020e0">{}</text>
<use href="#b" y="437"/><g transform="translate(0,437)"><path d="M3 3h11v9H3z" fill="none" stroke="#1020e0" stroke-width="2"/><circle cx="13.500" cy="12" r="5" fill="#fff" stroke="#e01010" stroke-width="2"/></g>
<use href="#b" y="460"/><ellipse transform="translate(0,460)" cx="11" cy="10.500" rx="8" ry="3.500" fill="#fff" stroke="#1020e0" stroke-width="2"/>
<use href="#b" y="483"/><g transform="translate(0,483)"><circle cx="11" cy="10.500" r="7.500" fill="none" stroke="#1020e0" stroke-width="1.800"/><circle cx="11" cy="10.500" r="4.800" fill="none" stroke="#e01010" stroke-width="1.500"/></g>
<use href="#b" y="506"/><g transform="translate(0,506)"><path d="M9 15V3h10M9 7h10" stroke="#1020e0" stroke-width="2" fill="none"/><ellipse cx="6.500" cy="15.500" rx="4" ry="2.500" fill="#1020e0"/></g>
<use href="#b" y="529"/><g transform="translate(0,529)"><path d="M3 4l3 7 3-7" stroke="#111" fill="none"/><path d="M11 5h8" stroke="#800080" stroke-width="2"/><path d="M11 9h8" stroke="#1020e0" stroke-width="2"/><path d="M11 13h8" stroke="#0a0" stroke-width="2"/><path d="M11 17h8" stroke="#e01010" stroke-width="2"/></g>
<use href="#b" y="552"/><g transform="translate(0,552)"><path d="M3 4h16M3 18h16" stroke="#1020e0" stroke-width="2"/><path d="M4 8h14M4 11h14M4 14h14" stroke="#e01010"/><path d="M11 4v14" stroke="#1020e0"/></g>
<use href="#b" y="575"/><g transform="translate(0,575)"><path d="M3 4h16" stroke="#e01010" stroke-width="2"/><path d="M3 18h16" stroke="#e01010" stroke-width="2"/><path d="M4 9h14M4 14h14" stroke="#1020e0"/><text x="11" y="15" text-anchor="middle" style="font:bold 10px 'Liberation Sans',sans-serif;fill:#111">2</text></g>
<use href="#b" y="598"/><g transform="translate(0,598)"><path d="M3 4h16M3 18h16" stroke="#1020e0" stroke-width="2"/><path d="M4 9h14M4 14h14" stroke="#0a0"/><text x="11" y="15" text-anchor="middle" style="font:bold 10px 'Liberation Sans',sans-serif;fill:#111">3</text></g>
<use href="#b" y="621"/><g transform="translate(0,621)"><path d="M3 4h16M3 18h16" stroke="#0a0" stroke-width="2"/><path d="M4 9h14M4 14h14" stroke="#1020e0"/><text x="11" y="15" text-anchor="middle" style="font:bold 10px 'Liberation Sans',sans-serif;fill:#111">4</text></g>
<use href="#b" y="644"/><g transform="translate(0,644)"><path d="M3 4h16M3 11h16M3 18h16" stroke="#1020e0" stroke-width="2"/><path d="M3 7.500h16M3 14.500h16" stroke="#e01010" stroke-width="1.500"/><path d="M11 3v15" stroke="#e01010"/></g>
<use href="#b" y="667"/><path transform="translate(0,667)" d="M3 13l11-10M6 16L17 6M9 18L19 9M4 19l3-5" stroke="#1020e0" stroke-width="1.500" fill="none"/>
<use href="#b" y="690"/><path transform="translate(0,690)" d="M3 18L19 5M3 18l16-8M3 18h16" stroke="#e01010" stroke-width=".9" fill="none"/><path transform="translate(0,690)" d="M3 18l12-4" stroke="#1020e0"/>
<use href="#b" y="713"/><path transform="translate(0,713)" d="M3 18L12 3M3 18l13-13M3 18L19 9M3 18l16-4" stroke="#1020e0" fill="none"/><path transform="translate(0,713)" d="M3 18L18 6" stroke="#e01010"/>
<use href="#b" y="736"/><path transform="translate(0,736)" d="M3 18L19 7M3 18l16-7M3 18l16-4M3 18l13-1" stroke="#e01010" fill="none"/><path transform="translate(0,736)" d="M3 18l9-3" stroke="#1020e0"/>
<use href="#b" y="759"/><path transform="translate(0,759)" d="M4 3v15M7 4v13M11 3v15M14 4v13M18 3v15" stroke="#1020e0" stroke-width="1.500"/><path transform="translate(0,759)" d="M3 11h16M14 4v13" stroke="#e01010"/>
<use href="#b" y="782"/><path transform="translate(0,782)" d="M4 3v15M8 3v15M12 5v11" stroke="#1020e0" stroke-width="1.500"/><path transform="translate(0,782)" d="M8 11h11M15 7v8M18 8v6" stroke="#e01010"/>
<use href="#b" y="805"/><path transform="translate(0,805)" d="M4 3v15M7 3v15M10 3v15M13 3v15M16 3v15M19 3v15" stroke="#1020e0" stroke-dasharray="2 1"/>
<use href="#b" y="828"/><path transform="translate(0,828)" d="M5 3v15M11 3v15M17 3v15" stroke="#1020e0" stroke-dasharray="2 1" stroke-width="1.200"/>
<use href="#b" y="851"/><path transform="translate(0,851)" d="M5 4l13 6.500L5 17z" fill="#8a8a8a" stroke="#1020e0"/>
<use href="#b" y="874"/><path transform="translate(0,874)" d="M3 12l15-6 1 4-15 6z" fill="#777"/>
<use href="#b" y="897"/><g transform="translate(0,897)"><text x="4" y="9" style="font:8px 'Liberation Sans',sans-serif;fill:#111">1</text><text x="13" y="8" style="font:8px 'Liberation Sans',sans-serif;fill:#111">3</text><text x="8" y="19" style="font:8px 'Liberation Sans',sans-serif;fill:#111">2</text><path d="M2 13l4-3 4 3 4-4 5 4" stroke="#1020e0" fill="none"/></g>
<use href="#b" y="920"/><text x="11" y="934" text-anchor="middle" style="font:bold 10px 'Liberation Sans',sans-serif;fill:#111">...</text>
</g>
</svg>
</body></html>
